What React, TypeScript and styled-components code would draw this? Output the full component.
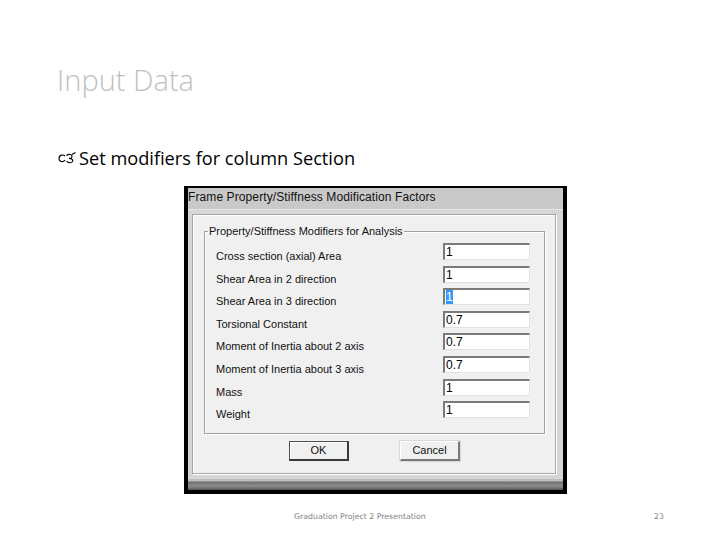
import * as React from 'react';
import styled, { createGlobalStyle } from 'styled-components';

const GlobalStyle = createGlobalStyle`
  html, body {
    margin: 0;
    padding: 0;
    background: #ffffff;
  }
  #root {
    width: 720px;
    height: 540px;
    overflow: hidden;
  }
`;

const Slide = styled.div`
  width: 720px;
  height: 540px;
  box-sizing: border-box;
  padding: 61px 0 0 57px;
  display: flex;
  flex-direction: column;
  font-family: 'Open Sans', 'Liberation Sans', sans-serif;
`;

const SlideTitle = styled.h1`
  margin: 0;
  font-size: 29px;
  line-height: 38px;
  font-weight: 300;
  color: #bfbfbf;
`;

const Bullet = styled.div`
  margin-top: 46px;
  display: flex;
  align-items: center;
  gap: 2px;
  font-size: 18.2px;
  line-height: 26px;
  color: #000000;
`;

const Shot = styled.div`
  margin: 15px 0 0 127px;
  width: 383px;
  box-sizing: border-box;
  border-style: solid;
  border-color: #000000;
  border-width: 2px 4px 4px 4px;
  display: flex;
  flex-direction: column;
  font-family: 'Liberation Sans', Arial, sans-serif;
`;

const TitleBar = styled.div`
  height: 21px;
  display: flex;
  align-items: center;
  padding-bottom: 4px;
  box-sizing: border-box;
  background: #c9c9c9;
  font-size: 12px;
  letter-spacing: 0.1px;
  color: #111111;
  white-space: nowrap;
  overflow: hidden;
`;

const WindowFrame = styled.div`
  background: #d6d6d6;
  padding: 4px 7px 5px 4px;
  border-top: 1px solid #e6e6e6;
`;

const Client = styled.div`
  background: #f0f0f0;
  border: 1px solid #a6a6a6;
  box-shadow: inset 1px 1px 0 #ffffff, 1px 1px 0 #ffffff;
  padding: 10px 10px 12px 11px;
  display: flex;
  flex-direction: column;
  align-items: stretch;
`;

const GroupBox = styled.fieldset`
  margin: 0;
  padding: 5px 14px 9px 11px;
  border: 1px solid #a0a0a0;
  box-shadow: 1px 1px 0 #ffffff, inset 1px 1px 0 #ffffff;
  display: grid;
  grid-template-columns: 1fr 87px;
  grid-auto-rows: 22.6px;
  align-items: start;
`;

const GroupLegend = styled.legend`
  padding: 0 1px;
  margin-left: -8px;
  font-size: 11px;
  line-height: 13px;
  color: #111111;
`;

const FieldLabel = styled.div`
  font-size: 11px;
  line-height: 13px;
  padding-top: 7px;
  color: #111111;
  white-space: nowrap;
`;

const FieldBox = styled.div`
  box-sizing: border-box;
  height: 17px;
  background: #ffffff;
  border-style: solid;
  border-width: 2px 1px 1px 2px;
  border-color: #7a7a7a #e2e2e2 #e2e2e2 #7a7a7a;
  font-size: 12px;
  line-height: 14px;
  padding-left: 1px;
  color: #000000;
`;

const Selected = styled.span`
  background: #3399ff;
  color: #ffffff;
`;

const ButtonRow = styled.div`
  display: flex;
  justify-content: center;
  gap: 51px;
  margin-top: 7px;
`;

const DialogButton = styled.div<{ $default?: boolean }>`
  box-sizing: border-box;
  width: 60px;
  height: 20px;
  display: flex;
  align-items: center;
  justify-content: center;
  background: #f0f0f0;
  font-size: 11px;
  color: #111111;
  border-style: solid;
  border-width: 1px 2px 2px 1px;
  border-color: ${(p) =>
    p.$default ? '#505050 #3a3a3a #3a3a3a #505050' : '#ffffff #7a7a7a #7a7a7a #ffffff'};
  box-shadow: ${(p) => (p.$default ? 'inset 1px 1px 0 #ffffff' : '0 0 0 1px #d8d8d8')};
`;

const BottomBand = styled.div`
  height: 11px;
  background: linear-gradient(#bdbdbd 0, #bdbdbd 2px, #6e6e6e 3px, #8e8e8e 7px, #555555 11px);
`;

const Footer = styled.div`
  margin-top: 18px;
  display: flex;
  align-items: center;
  padding-left: 237px;
  width: 607px;
  box-sizing: border-box;
  font-family: 'DejaVu Sans', 'Liberation Sans', sans-serif;
  font-size: 7.8px;
  color: #7f7f7f;
`;

const FooterText = styled.span`
  letter-spacing: 0px;
`;

const PageNumber = styled.span`
  margin-left: auto;
`;

const BulletMark = () => (
  <svg width="20" height="14" viewBox="0 0 20 14" fill="none" stroke="#000" strokeWidth="1.1">
    <path d="M8 5.2 C6.5 3.2 2.2 3.6 2 7.5 C1.9 10.8 6 11.6 8 9.2" />
    <path d="M9.5 4.6 C11.5 2.6 15.5 3.2 15 5.8 C14.7 7.2 13 7.5 12 7.4 C14.5 7.5 16.5 8.6 15.6 10.6 C14.6 12.4 11 12 9.6 10.2" />
    <path d="M14.8 3.6 L18.5 1.6" />
  </svg>
);

const rows: { label: string; value: string; selected?: boolean }[] = [
  { label: 'Cross section (axial) Area', value: '1' },
  { label: 'Shear Area in 2 direction', value: '1' },
  { label: 'Shear Area in 3 direction', value: '1', selected: true },
  { label: 'Torsional Constant', value: '0.7' },
  { label: 'Moment of Inertia about 2 axis', value: '0.7' },
  { label: 'Moment of Inertia about 3 axis', value: '0.7' },
  { label: 'Mass', value: '1' },
  { label: 'Weight', value: '1' },
];

const App: React.FC = () => {
  return (
    <>
      <GlobalStyle />
      <Slide>
        <SlideTitle>Input Data</SlideTitle>
        <Bullet>
          <BulletMark />
          <span>Set modifiers for column Section</span>
        </Bullet>
        <Shot>
          <TitleBar>Frame Property/Stiffness Modification Factors</TitleBar>
          <WindowFrame>
            <Client>
              <GroupBox>
                <GroupLegend>Property/Stiffness Modifiers for Analysis</GroupLegend>
                {rows.map((r) => (
                  <React.Fragment key={r.label}>
                    <FieldLabel>{r.label}</FieldLabel>
                    <FieldBox>{r.selected ? <Selected>{r.value}</Selected> : r.value}</FieldBox>
                  </React.Fragment>
                ))}
              </GroupBox>
              <ButtonRow>
                <DialogButton $default>OK</DialogButton>
                <DialogButton>Cancel</DialogButton>
              </ButtonRow>
            </Client>
          </WindowFrame>
          <BottomBand />
        </Shot>
        <Footer>
          <FooterText>Graduation Project 2 Presentation</FooterText>
          <PageNumber>23</PageNumber>
        </Footer>
      </Slide>
    </>
  );
};

export default App;
